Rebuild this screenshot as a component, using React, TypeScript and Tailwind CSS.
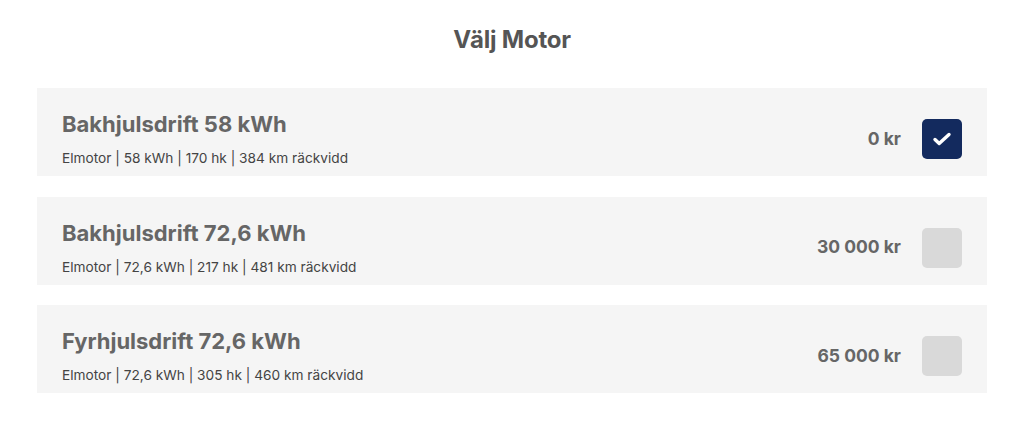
import React, { useState } from "react";

type Motor = {
  name: string;
  specs: string;
  price: string;
};

const motors: Motor[] = [
  { name: "Bakhjulsdrift 58 kWh", specs: "Elmotor | 58 kWh | 170 hk | 384 km räckvidd", price: "0 kr" },
  { name: "Bakhjulsdrift 72,6 kWh", specs: "Elmotor | 72,6 kWh | 217 hk | 481 km räckvidd", price: "30 000 kr" },
  { name: "Fyrhjulsdrift 72,6 kWh", specs: "Elmotor | 72,6 kWh | 305 hk | 460 km räckvidd", price: "65 000 kr" },
];

const CheckIcon = () => (
  <svg viewBox="0 0 20 16" className="w-[20px] h-[16px]" fill="none">
    <path d="M3 8.5l4.2 4L17 3.5" stroke="white" strokeWidth="3.4" strokeLinecap="round" strokeLinejoin="round" />
  </svg>
);

export default function App() {
  const [selected, setSelected] = useState(0);

  return (
    <div className="w-[1024px] h-[426px] bg-white font-['Inter',sans-serif] pt-[26px]">
      <h2 className="text-center text-[24px] leading-[28px] font-bold text-[#555] tracking-[-0.2px]">
        Välj Motor
      </h2>
      <ul className="mx-[37px] mt-[34px] flex flex-col gap-[20.5px]">
        {motors.map((m, i) => (
          <li
            key={m.name}
            onClick={() => setSelected(i)}
            className="h-[88px] bg-[#f5f5f5] flex items-center justify-between pt-[14px] pl-[25px] pr-[25px] cursor-pointer"
          >
            <div className="flex flex-col">
              <div className="text-[22px] leading-[26px] font-bold text-[#666]">{m.name}</div>
              <div className="mt-[12px] text-[13.7px] leading-[18px] text-[#444]">{m.specs}</div>
            </div>
            <div className="flex items-center gap-[21px]">
              <span className="text-[17.5px] font-bold text-[#666]">{m.price}</span>
              <span
                className={
                  selected === i
                    ? "w-[40px] h-[40px] rounded-[5px] bg-[#132a5e] flex items-center justify-center"
                    : "w-[40px] h-[40px] rounded-[5px] bg-[#d9d9d9]"
                }
              >
                {selected === i && <CheckIcon />}
              </span>
            </div>
          </li>
        ))}
      </ul>
    </div>
  );
}
